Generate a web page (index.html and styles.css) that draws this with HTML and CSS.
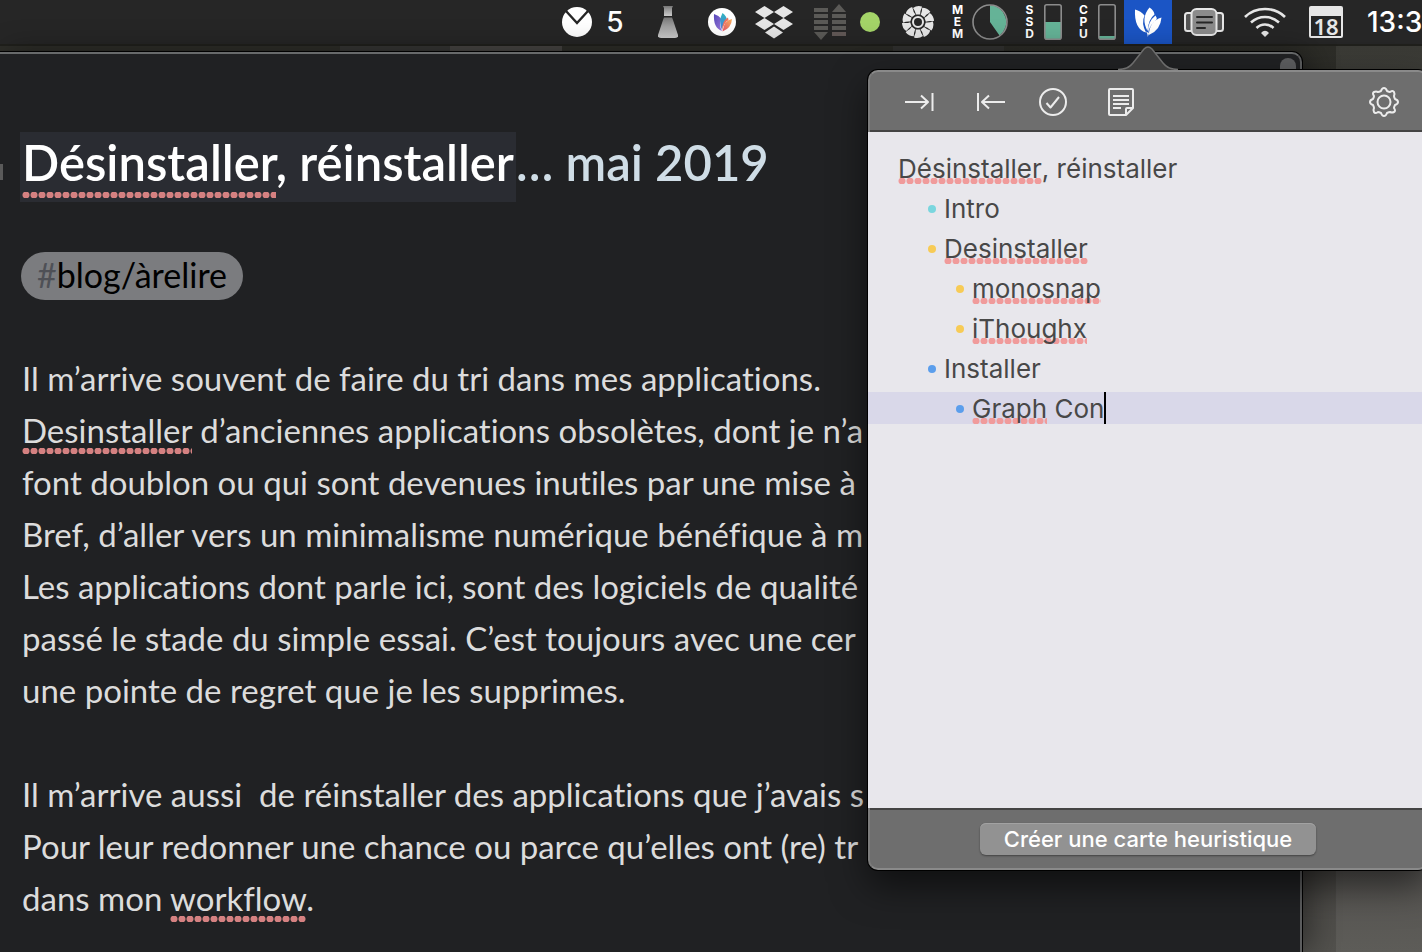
FILE: index.html
```html
<!DOCTYPE html>
<html lang="fr">
<head>
<meta charset="utf-8">
<title>Désinstaller, réinstaller</title>
<link rel="stylesheet" href="styles.css">
</head>
<body>
<header class="menubar">
  <button class="status mail" aria-label="Courrier">
    <svg width="30" height="30" viewBox="0 0 30 30"><circle cx="15" cy="15" r="15" fill="#fff"/><path d="M4 4l11 12L26 4" fill="none" stroke="#262626" stroke-width="2.4"/></svg>
    <span>5</span>
  </button>
  <button class="status flask" aria-label="Fiole">
    <svg width="20" height="34" viewBox="0 0 20 34"><defs><linearGradient id="fl" x2="0" y2="1"><stop offset="0" stop-color="#777"/><stop offset=".35" stop-color="#999"/><stop offset="1" stop-color="#ccc"/></linearGradient></defs><path d="M5 1h10l-1 2v8H6V3z" fill="url(#fl)"/><path d="M6 12.500h8l1 2.500 5 15q.5 3-3 3H3q-3.500 0-3-3l5-15z" fill="url(#fl)"/></svg>
  </button>
  <button class="status lotus" aria-label="MindNode">
    <svg width="28" height="28" viewBox="0 0 28 28"><defs><linearGradient id="la" x2="1" y2="1"><stop offset="0" stop-color="#5648b8"/><stop offset="1" stop-color="#9a78dc"/></linearGradient><linearGradient id="lb" x2="0" y2="1"><stop offset="0" stop-color="#32b5bd"/><stop offset="1" stop-color="#4a7de0"/></linearGradient><linearGradient id="lc" x1="1" x2="0" y2="1"><stop offset="0" stop-color="#f6b35c"/><stop offset="1" stop-color="#e65469"/></linearGradient></defs><circle cx="14" cy="14" r="14" fill="#fff"/><path d="M6 6q5 1.500 7.500 5-3 6 .5 12Q5 20 6 6z" fill="url(#la)"/><path d="M14.500 5q4 3 4.500 7-4 3-5 10-4-9 .5-17z" fill="url(#lb)"/><path d="M24 11q-8 1-9.500 12.500 9-3.500 9.500-12.500z" fill="url(#lc)"/><path d="M20 9.500q-6 3-6 13.500 1.500-8 6.500-11z" fill="#ef735c"/></svg>
  </button>
  <button class="status dropbox" aria-label="Dropbox">
    <svg width="38" height="34" viewBox="0 0 38 34" fill="#e6e6e6"><path d="M9.500 1L19 7l-9.500 6L0 7zM28.500 1L38 7l-9.500 6L19 7zM9.500 13l9.500 6-9.500 6L0 19zM28.500 13l9.500 6-9.500 6-9.500-6zM19 21.500l9 6-9 6-9-6z"/></svg>
  </button>
  <button class="status net" aria-label="Réseau">
    <svg width="32" height="36" viewBox="0 0 32 36" fill="#5b5a57"><path d="M0 4h14v4H0zM0 10h14v4H0zM0 16h14v4H0zM0 22h14v4H0zM0 28h14l-7 8zM18 10h14v4H18zM18 16h14v4H18zM18 22h14v4H18zM18 8h14l-7-8z"/><path d="M18 28h14v4H18z" fill="#625957"/></svg>
  </button>
  <button class="status dot" aria-label="Actif">
    <svg width="20" height="20" viewBox="0 0 20 20"><circle cx="10" cy="10" r="10" fill="#a4d468"/></svg>
  </button>
  <button class="status fan" aria-label="Ventilateur">
    <svg width="32" height="32" viewBox="-16 -16 32 32"><defs><path id="blade" d="M-2-7.500Q-2.800-11-5-14Q-1-17 4-15.500L3.500-13.500Q2-11 2.300-7.500z"/></defs><g fill="#e6e6e6"><use href="#blade"/><use href="#blade" transform="rotate(36)"/><use href="#blade" transform="rotate(72)"/><use href="#blade" transform="rotate(108)"/><use href="#blade" transform="rotate(144)"/><use href="#blade" transform="rotate(180)"/><use href="#blade" transform="rotate(216)"/><use href="#blade" transform="rotate(252)"/><use href="#blade" transform="rotate(288)"/><use href="#blade" transform="rotate(324)"/></g><circle r="5" fill="#262626" stroke="#e6e6e6" stroke-width="2"/></svg>
  </button>
  <button class="status mem">
    <span class="stack">M<br>E<br>M</span>
    <svg width="36" height="36" viewBox="0 0 36 36"><path d="M18 18V1a17 17 0 0 1 9.500 30.500z" fill="#65b397"/><circle cx="18" cy="18" r="17" fill="none" stroke="#8c8c8c" stroke-width="1.600"/></svg>
  </button>
  <button class="status gauge">
    <span class="stack">S<br>S<br>D</span>
    <svg width="18" height="36" viewBox="0 0 18 36"><path d="M1 18h16v17H1z" fill="#65b397"/><rect x=".8" y=".8" width="16.400" height="34.400" rx="2" fill="none" stroke="#8c8c8c" stroke-width="1.600"/></svg>
  </button>
  <button class="status gauge">
    <span class="stack">C<br>P<br>U</span>
    <svg width="18" height="36" viewBox="0 0 18 36"><path d="M1 32h16v3H1z" fill="#65b397"/><rect x=".8" y=".8" width="16.400" height="34.400" rx="2" fill="none" stroke="#8c8c8c" stroke-width="1.600"/></svg>
  </button>
  <button class="status active" aria-label="Saisie rapide">
    <svg width="28" height="30" viewBox="0 0 28 30" fill="#fff"><path d="M1 2.500Q7 4 10.500 8.500 7 16 12 25.500Q0 22 1 2.500zM15.500 .5Q20 3.500 20.500 7.500 14.500 12 13.500 24 6.500 11 15.500 .5zM21.500 8.500Q23 10.500 22.500 12.500 16 17 14 26 13.500 14.500 21.500 8.500zM27.500 10.500Q26.500 23.500 14.800 28 15.500 14 27.500 10.500zM11 24Q13.500 25 13.800 30L15 26Z"/></svg>
  </button>
  <button class="status clip" aria-label="Presse-papiers">
    <svg width="40" height="28" viewBox="0 0 40 28"><path d="M8 5H3.500Q1 5 1 7.500v13Q1 23 3.500 23H8M32 5h4.500Q39 5 39 7.500v13q0 2.500-2.500 2.500H32" fill="#555" stroke="#e6e6e6" stroke-width="2"/><rect x="7.500" y="1" width="25" height="26" rx="5" fill="#8b8b8b" stroke="#e6e6e6" stroke-width="2"/><path d="M13 9h15M13 14.500h15M13 20h8" stroke="#262626" stroke-width="2" stroke-linecap="round"/></svg>
  </button>
  <button class="status wifi" aria-label="Wi-Fi">
    <svg width="42" height="30" viewBox="0 0 42 30" fill="none" stroke="#e6e6e6" stroke-width="2.600"><path d="M1 10Q9 2 21 2t20 8M7 15.500Q13 10 21 10t14 5.500M12.500 21Q16 17.500 21 17.500t8.500 3.500"/><path d="M17 26q4-4.500 8 0l-4 4z" fill="#e6e6e6" stroke="none"/></svg>
  </button>
  <button class="status date"><span class="calendar">18</span></button>
  <time class="clock">13:3</time>
</header>

<main class="desktop">
  <div class="strip"></div>
  <article class="editor">
    <h1 class="title"><mark class="selected"><span class="typo">Désinstaller</span>, réinstaller</mark>… mai 2019</h1>
    <a class="tag" href="#blog"><span class="hash">#</span>blog/àrelire</a>
    <p class="text">Il m’arrive souvent de faire du tri dans mes applications.<br>
      <span class="typo">Desinstaller</span> d’anciennes applications obsolètes, dont je n’a<br>
      font doublon ou qui sont devenues inutiles par une mise à<br>
      Bref, d’aller vers un minimalisme numérique bénéfique à m<br>
      Les applications dont parle ici, sont des logiciels de qualité<br>
      passé le stade du simple essai. C’est toujours avec une cer<br>
      une pointe de regret que je les supprimes.</p>
    <p class="text">Il m’arrive aussi&nbsp; de réinstaller des applications que j’avais s<br>
      Pour leur redonner une chance ou parce qu’elles ont (re) tr<br>
      dans mon <span class="typo">workflow</span>.</p>
    <span class="scroll-thumb"></span>
    <span class="heading-mark"></span>
  </article>
</main>

<section class="popover" aria-label="Saisie rapide">
  <svg class="arrow" width="60" height="24" viewBox="0 0 60 24"><path d="M0 24Q10 23.500 15 17L26 3Q30-1 34 3L45 17Q50 23.500 60 24z" fill="#3c3c3c"/><path d="M0 23.500Q10 23.500 15 17L26 3Q30-1 34 3L45 17Q50 23.500 60 23.500" fill="none" stroke="#6c6c6c" stroke-width="1.500"/></svg>
  <div class="toolbar">
    <button class="indent" aria-label="Indenter"><svg width="30" height="20" viewBox="0 0 30 20"><path d="M0 10h23M16 3.500l7 6.500-7 6.500M27.500 1v18"/></svg></button>
    <button class="outdent" aria-label="Désindenter"><svg width="30" height="20" viewBox="0 0 30 20"><path d="M29 10H6M13 3.500L6 10l7 6.500M2 1v18"/></svg></button>
    <button class="task" aria-label="Tâche"><svg width="30" height="30" viewBox="0 0 30 30"><circle cx="15" cy="15" r="13"/><path d="M8.500 16l4 4.500L21 10"/></svg></button>
    <button class="note" aria-label="Note"><svg width="28" height="30" viewBox="0 0 28 30"><path d="M3 2h22q1 0 1 1v18l-7 7H3q-1 0-1-1V3q0-1 1-1zM19 28v-6q0-1 1-1h6M6 9h16M6 13h16M6 17h16M6 21h8"/></svg></button>
    <button class="settings" aria-label="Réglages"><svg width="32" height="32" viewBox="-16 -16 32 32"><circle r="6.500"/><path d="M-3-11Q-2-14 0-14T3-11Q5-10 6-10Q9-12 10-10T10-6Q10-5 11-3Q14-2 14 0T11 3Q10 5 10 6Q12 9 10 10T6 10Q5 10 3 11Q2 14 0 14T-3 11Q-5 10-6 10Q-9 12-10 10T-10 6Q-10 5-11 3Q-14 2-14 0T-11-3Q-10-5-10-6Q-12-9-10-10T-6-10Q-5-10-3-11z"/></svg></button>
  </div>
  <ul class="outline">
    <li><span class="typo">Désinstaller</span>, réinstaller</li>
    <li class="child cyan">Intro</li>
    <li class="child yellow"><span class="typo">Desinstaller</span></li>
    <li class="grandchild yellow"><span class="typo">monosnap</span></li>
    <li class="grandchild yellow"><span class="typo">iThoughx</span></li>
    <li class="child blue">Installer</li>
    <li class="grandchild blue current"><span class="typo">Graph</span>&nbsp;Con<span class="caret"></span></li>
  </ul>
  <footer class="actions"><button class="create">Créer une carte heuristique</button></footer>
</section>
</body>
</html>
```
FILE: styles.css
```css
* { box-sizing: border-box; }
html, body { height: 100%; }
body {
  margin: 0;
  position: relative;
  display: flex;
  flex-direction: column;
  overflow: hidden;
  background: #262626;
  font-family: Lato, sans-serif;
  font-variant-ligatures: no-common-ligatures;
}
button { margin: 0; padding: 0; border: 0; background: none; color: inherit; font: inherit; }
svg { display: block; flex: none; }

.menubar {
  flex: none;
  display: flex;
  justify-content: flex-end;
  height: 44px;
  background: #262626;
  color: #fff;
  font-family: Inter, sans-serif;
}
.status { display: flex; flex: none; align-items: center; justify-content: center; }
.mail { width: 70px; gap: 14px; font-size: 28px; font-weight: 500; }
.flask { width: 80px; }
.lotus { width: 28px; }
.dropbox { width: 76px; }
.net { width: 36px; }
.dot { width: 44px; }
.fan { width: 52px; }
.mem { width: 72px; gap: 9px; }
.gauge { width: 54px; gap: 9px; }
.active { width: 48px; background: #1b55c5; }
.clip { width: 64px; }
.wifi { width: 58px; }
.date { width: 64px; }
.stack { width: 11px; font-size: 12px; font-weight: 700; line-height: 12px; text-align: center; }
.calendar {
  width: 34px;
  height: 32px;
  border: 2px solid #e6e6e6;
  border-top-width: 10px;
  border-radius: 2px;
  color: #e6e6e6;
  font: 600 22px/20px "Noto Sans", sans-serif;
}
.clock { width: 64px; padding-left: 9px; overflow: hidden; font-size: 28px; font-weight: 500; line-height: 44px; white-space: nowrap; }

.desktop {
  flex: 1;
  min-height: 0;
  display: flex;
  flex-direction: column;
  background: linear-gradient(90deg, transparent calc(100% - 86px), #ffffff10 calc(100% - 86px)), linear-gradient(#2d2d28, #3a3936 40%, #4a4845 90%, #52514d);
}
.strip {
  flex: none;
  height: 8px;
  border-top: 2px solid #20201c;
  background: linear-gradient(90deg, #2d2d28 340px, #353533 340px, #353533 450px, #464442 450px, #464442 562px, #2d2d28 562px, #2d2d28 893px, #353533 893px, #353533 1004px, transparent 1004px);
}
.editor {
  position: relative;
  flex: 1;
  margin-right: 120px;
  padding: 78px 0 0 20px;
  border-top: 2px solid #686a6b;
  border-right: 2px solid #5c5d5e;
  border-top-right-radius: 10px;
  box-shadow: 0 0 0 1px #000, 8px 0 30px #0006;
  background: #202123;
  color: #dcdcdc;
  white-space: nowrap;
}
.title { margin: 0; color: #cfdde6; font-size: 49px; font-weight: 600; line-height: 60px; }
.selected { display: inline-block; padding: 0 2px 10px; background: #2a2c32; color: #fff; }
.typo { padding-bottom: 4px; background: radial-gradient(circle at 4px 3px, #d58181 3px, #d5818100 4px) left bottom / 8px 6px repeat-x; }
.title .typo { padding-bottom: 7px; }
.tag {
  display: inline-block;
  margin: 50px 0 0 1px;
  padding: 0 16px 3px;
  border-radius: 24px;
  background: #7b7c7f;
  color: #000;
  font-size: 34px;
  line-height: 45px;
  text-decoration: none;
}
.hash { color: #4e5056; }
.text { margin: 52px 0 0; padding-left: 2px; font-size: 33px; line-height: 52px; }
.scroll-thumb { position: absolute; top: 4px; right: 4px; width: 16px; height: 60px; border-radius: 8px; background: #5c5d5f; }
.heading-mark { position: absolute; top: 110px; left: 0; width: 3px; height: 16px; background: #5a5a5a; }

.popover {
  position: absolute;
  top: 70px;
  right: -6px;
  width: 560px;
  height: 800px;
  display: flex;
  flex-direction: column;
  border: 2px solid #8a8a8a;
  border-left-color: #7c7c7c;
  border-radius: 10px;
  background: #6e6e6e;
  box-shadow: 0 0 0 1px #000, 0 16px 36px #0008;
}
.arrow { position: absolute; top: -26px; right: 248px; }
.toolbar { display: flex; height: 60px; padding: 0 26px 0 14px; border-bottom: 2px solid #444; }
.toolbar button { display: flex; align-items: center; justify-content: center; padding-top: 2px; }
.toolbar svg { fill: none; stroke: #ececec; stroke-width: 2; stroke-linejoin: round; }
.indent { width: 72px; }
.outdent { width: 70px; }
.task { width: 54px; }
.note { width: 82px; }
.toolbar .settings { margin-left: auto; }
.outline {
  flex: 1;
  margin: 0 0 0 -2px;
  padding: 20px 0;
  display: flex;
  flex-direction: column;
  gap: 8px;
  list-style: none;
  background: #e8e7ec;
  color: #484848;
  font-family: Inter, sans-serif;
  font-size: 26px;
  line-height: 30px;
}
.outline li { display: flex; align-items: center; height: 32px; padding: 2px 0 0 30px; white-space: nowrap; }
.outline .typo { padding-bottom: 0; background-image: radial-gradient(circle at 4px 3px, #f09b9b 3px, #f09b9b00 4px); }
.outline .child { padding-left: 60px; }
.outline .grandchild { padding-left: 88px; }
.child::before, .grandchild::before { content: ""; width: 8px; height: 8px; margin-right: 8px; border-radius: 4px; background: currentColor; }
.cyan::before { background: #7ad6de; }
.yellow::before { background: #f7cb56; }
.blue::before { background: #5b9eec; }
.outline .current { background: #d9d8e9; }
.caret { align-self: flex-end; width: 2px; height: 32px; background: #000; }
.actions { display: flex; justify-content: center; align-items: center; height: 60px; border-top: 2px solid #444; }
.create {
  width: 336px;
  height: 32px;
  border-radius: 6px;
  background: #929292;
  box-shadow: inset 0 1px #a2a2a2, 0 1px 2px #0006;
  color: #fff;
  font-family: Inter, sans-serif;
  font-size: 22px;
  font-weight: 500;
}
```
